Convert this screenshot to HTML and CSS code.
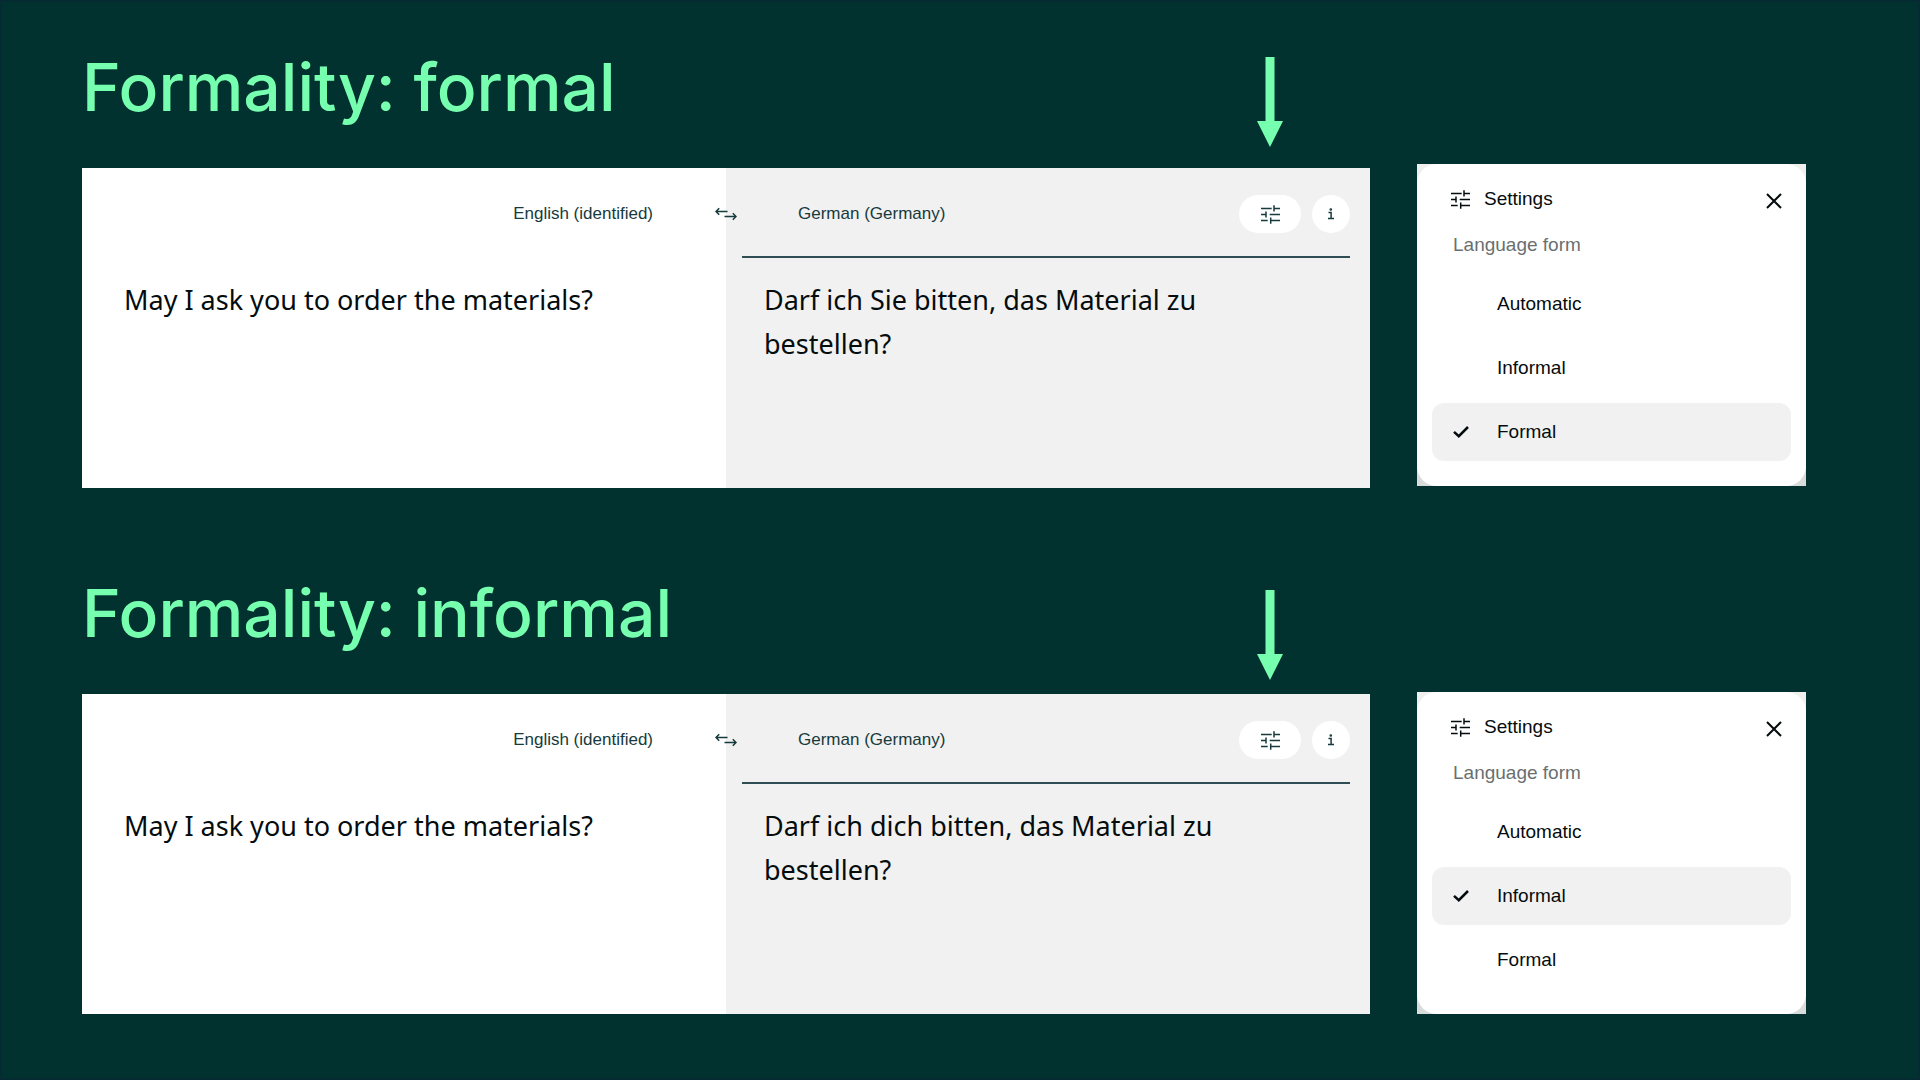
FILE: index.html
```html
<!DOCTYPE html>
<html lang="en">
<head>
  <meta charset="UTF-8">
  <title>Formality</title>
  <link rel="stylesheet" href="styles.css">
</head>
<body>
  <!-- shared icons -->
  <svg class="sprite" aria-hidden="true">
    <symbol id="icon-tune" viewBox="0 0 19 19">
      <path d="M0 3.4H10.7M13 0.2V6.4M13 3.4H19M0 9.5H5M5 6.4V12.6M8.7 9.5H19M0 15.6H6.7M9.7 12.6V18.8M9.7 15.6H19"/>
    </symbol>
    <symbol id="icon-swap" viewBox="0 0 22 14">
      <path d="M12.5 4.5H1M4.2 1.2L1 4.5L4.2 7.8M9.5 9.5H21M17.8 6.2L21 9.5L17.8 12.8"/>
    </symbol>
    <symbol id="icon-close" viewBox="0 0 16 16">
      <path d="M1 1L15 15M15 1L1 15"/>
    </symbol>
    <symbol id="icon-check" viewBox="0 0 16 12">
      <path d="M1 5.8L5.8 10.2L15 1"/>
    </symbol>
    <symbol id="icon-info" viewBox="0 0 8 12">
      <path d="M1.5 4.6H4.1V10.4M1 10.6H7"/>
      <circle cx="3.8" cy="1.5" r="0.6"/>
    </symbol>
    <symbol id="icon-arrow" viewBox="0 0 26 90">
      <path d="M8.5 0H17.5V64H26L13 90L0 64H8.5Z"/>
    </symbol>
  </svg>

  <main class="slide">
    <div class="translations">
      <section>
        <div class="heading">
          <h2>Formality: formal</h2>
          <svg class="arrow"><use href="#icon-arrow"/></svg>
        </div>
        <div class="translator">
          <div class="pane source">
            <div class="toolbar">
              <button class="language">English (identified)</button>
            </div>
            <textarea aria-label="Source text" spellcheck="false">May I ask you to order the materials?</textarea>
          </div>
          <div class="pane target">
            <div class="toolbar">
              <button class="language">German (Germany)</button>
              <button class="tool wide" aria-label="Settings"><svg class="icon tune"><use href="#icon-tune"/></svg></button>
              <button class="tool" aria-label="Info"><svg class="icon info"><use href="#icon-info"/></svg></button>
            </div>
            <textarea aria-label="Translation" spellcheck="false" readonly>Darf ich Sie bitten, das Material zu bestellen?</textarea>
          </div>
          <button class="swap" aria-label="Swap languages"><svg class="icon"><use href="#icon-swap"/></svg></button>
        </div>
      </section>

      <section>
        <div class="heading">
          <h2>Formality: informal</h2>
          <svg class="arrow low"><use href="#icon-arrow"/></svg>
        </div>
        <div class="translator">
          <div class="pane source">
            <div class="toolbar">
              <button class="language">English (identified)</button>
            </div>
            <textarea aria-label="Source text" spellcheck="false">May I ask you to order the materials?</textarea>
          </div>
          <div class="pane target">
            <div class="toolbar">
              <button class="language">German (Germany)</button>
              <button class="tool wide" aria-label="Settings"><svg class="icon tune"><use href="#icon-tune"/></svg></button>
              <button class="tool" aria-label="Info"><svg class="icon info"><use href="#icon-info"/></svg></button>
            </div>
            <textarea aria-label="Translation" spellcheck="false" readonly>Darf ich dich bitten, das Material zu bestellen?</textarea>
          </div>
          <button class="swap" aria-label="Swap languages"><svg class="icon"><use href="#icon-swap"/></svg></button>
        </div>
      </section>
    </div>

    <div class="settings-list">
      <aside class="settings">
        <form class="settings-body">
          <div class="settings-header">
            <svg class="icon tune"><use href="#icon-tune"/></svg>
            <h3>Settings</h3>
            <button type="button" class="close" aria-label="Close"><svg class="icon"><use href="#icon-close"/></svg></button>
          </div>
          <p class="group-title">Language form</p>
          <div class="options">
            <label class="option"><input type="radio" name="form"><svg class="icon check"><use href="#icon-check"/></svg>Automatic</label>
            <label class="option"><input type="radio" name="form"><svg class="icon check"><use href="#icon-check"/></svg>Informal</label>
            <label class="option"><input type="radio" name="form" checked><svg class="icon check"><use href="#icon-check"/></svg>Formal</label>
          </div>
        </form>
      </aside>

      <aside class="settings">
        <form class="settings-body">
          <div class="settings-header">
            <svg class="icon tune"><use href="#icon-tune"/></svg>
            <h3>Settings</h3>
            <button type="button" class="close" aria-label="Close"><svg class="icon"><use href="#icon-close"/></svg></button>
          </div>
          <p class="group-title">Language form</p>
          <div class="options">
            <label class="option"><input type="radio" name="form"><svg class="icon check"><use href="#icon-check"/></svg>Automatic</label>
            <label class="option"><input type="radio" name="form" checked><svg class="icon check"><use href="#icon-check"/></svg>Informal</label>
            <label class="option"><input type="radio" name="form"><svg class="icon check"><use href="#icon-check"/></svg>Formal</label>
          </div>
        </form>
      </aside>
    </div>
  </main>
</body>
</html>
```
FILE: styles.css
```css
* {
  box-sizing: border-box;
}

body {
  margin: 0;
  min-height: 100vh;
  background-color: #01322f;
  box-shadow: inset 0 0 0 2px #062a32;
  color: #050c0e;
  font-family: "Liberation Sans", Arial, Helvetica, sans-serif;
  font-size: 19px;
}

h2,
h3,
p {
  margin: 0;
  font-weight: normal;
}

button {
  border: none;
  padding: 0;
  background: none;
  color: inherit;
  font: inherit;
  cursor: pointer;
}

.sprite {
  position: absolute;
  width: 0;
  height: 0;
}

.icon {
  display: block;
  flex: none;
  fill: none;
  stroke: currentColor;
  stroke-width: 1.5;
}

.tune {
  width: 19px;
  height: 19px;
}

.slide {
  display: grid;
  grid-template-columns: 1288fr 389fr;
  gap: 47px;
  padding: 0 114px 0 82px;
}

/* translations */
.translations {
  display: flex;
  flex-direction: column;
  gap: 95px;
  padding-top: 57px;
}

.heading {
  display: flex;
  justify-content: space-between;
  align-items: flex-start;
  min-height: 111px;
  padding: 0 87px 14px 0;
}

.heading h2 {
  color: #77ffb0;
  font-family: Inter, sans-serif;
  font-size: 66px;
  font-weight: 500;
  line-height: 60px;
}

.arrow {
  width: 26px;
  height: 90px;
  fill: #77ffb0;
}

.arrow.low {
  align-self: flex-end;
}

.translator {
  position: relative;
  display: grid;
  grid-template-columns: 1fr 1fr;
  min-height: 320px;
}

.pane {
  display: flex;
  flex-direction: column;
}

.source {
  background-color: #fff;
}

.target {
  background-color: #f1f1f1;
}

.toolbar {
  display: flex;
  align-items: center;
  height: 90px;
  padding-top: 2px;
  color: #173a3c;
  font-size: 17px;
}

.source .toolbar {
  justify-content: flex-end;
  padding-right: 73px;
}

.target .toolbar {
  gap: 11px;
  margin: 0 20px 0 16px;
  padding: 4px 0 0 56px;
  border-bottom: 2px solid #2f4d55;
}

.target .language {
  margin-right: auto;
}

.tool {
  display: flex;
  align-items: center;
  justify-content: center;
  width: 38px;
  height: 38px;
  border-radius: 19px;
  background-color: #fff;
}

.tool.wide {
  width: 62px;
}

.info {
  width: 8px;
  height: 12px;
}

.swap {
  position: absolute;
  top: 39px;
  left: 50%;
  transform: translateX(-50%);
  color: #173a3c;
}

.swap .icon {
  width: 22px;
  height: 14px;
}

textarea {
  flex: 1;
  border: none;
  outline: none;
  resize: none;
  padding: 20px 64px 20px 42px;
  background: none;
  color: #050c0e;
  font-family: "Noto Sans", sans-serif;
  font-size: 27px;
  line-height: 44px;
}

.target textarea {
  padding-left: 38px;
}

/* settings cards */
.settings-list {
  display: flex;
  flex-direction: column;
  gap: 206px;
  padding-top: 164px;
}

.settings {
  background: linear-gradient(#f0f0f0, #d8dcdb);
}

.settings-body {
  padding: 18px 15px 25px;
  border-radius: 20px;
  background-color: #fff;
}

.settings-header {
  display: flex;
  align-items: center;
  gap: 14px;
  height: 34px;
  padding: 0 9px 0 19px;
}

.settings-header h3 {
  font-size: 19px;
}

.close {
  margin-left: auto;
  padding-top: 4px;
}

.close .icon {
  width: 16px;
  height: 16px;
  stroke-width: 2;
}

.group-title {
  padding: 17px 21px 0;
  color: #6a6f70;
  line-height: 24px;
}

.options {
  display: flex;
  flex-direction: column;
  gap: 6px;
  padding-top: 18px;
}

.option {
  position: relative;
  display: flex;
  align-items: center;
  gap: 28px;
  height: 58px;
  padding: 0 21px;
  border-radius: 12px;
}

.option:has(input:checked) {
  background-color: #f1f1f1;
}

.option input {
  position: absolute;
  inset: 0;
  appearance: none;
  margin: 0;
  cursor: pointer;
}

.check {
  width: 16px;
  height: 12px;
  stroke-width: 2.5;
  visibility: hidden;
}

.option input:checked + .check {
  visibility: visible;
}
```
